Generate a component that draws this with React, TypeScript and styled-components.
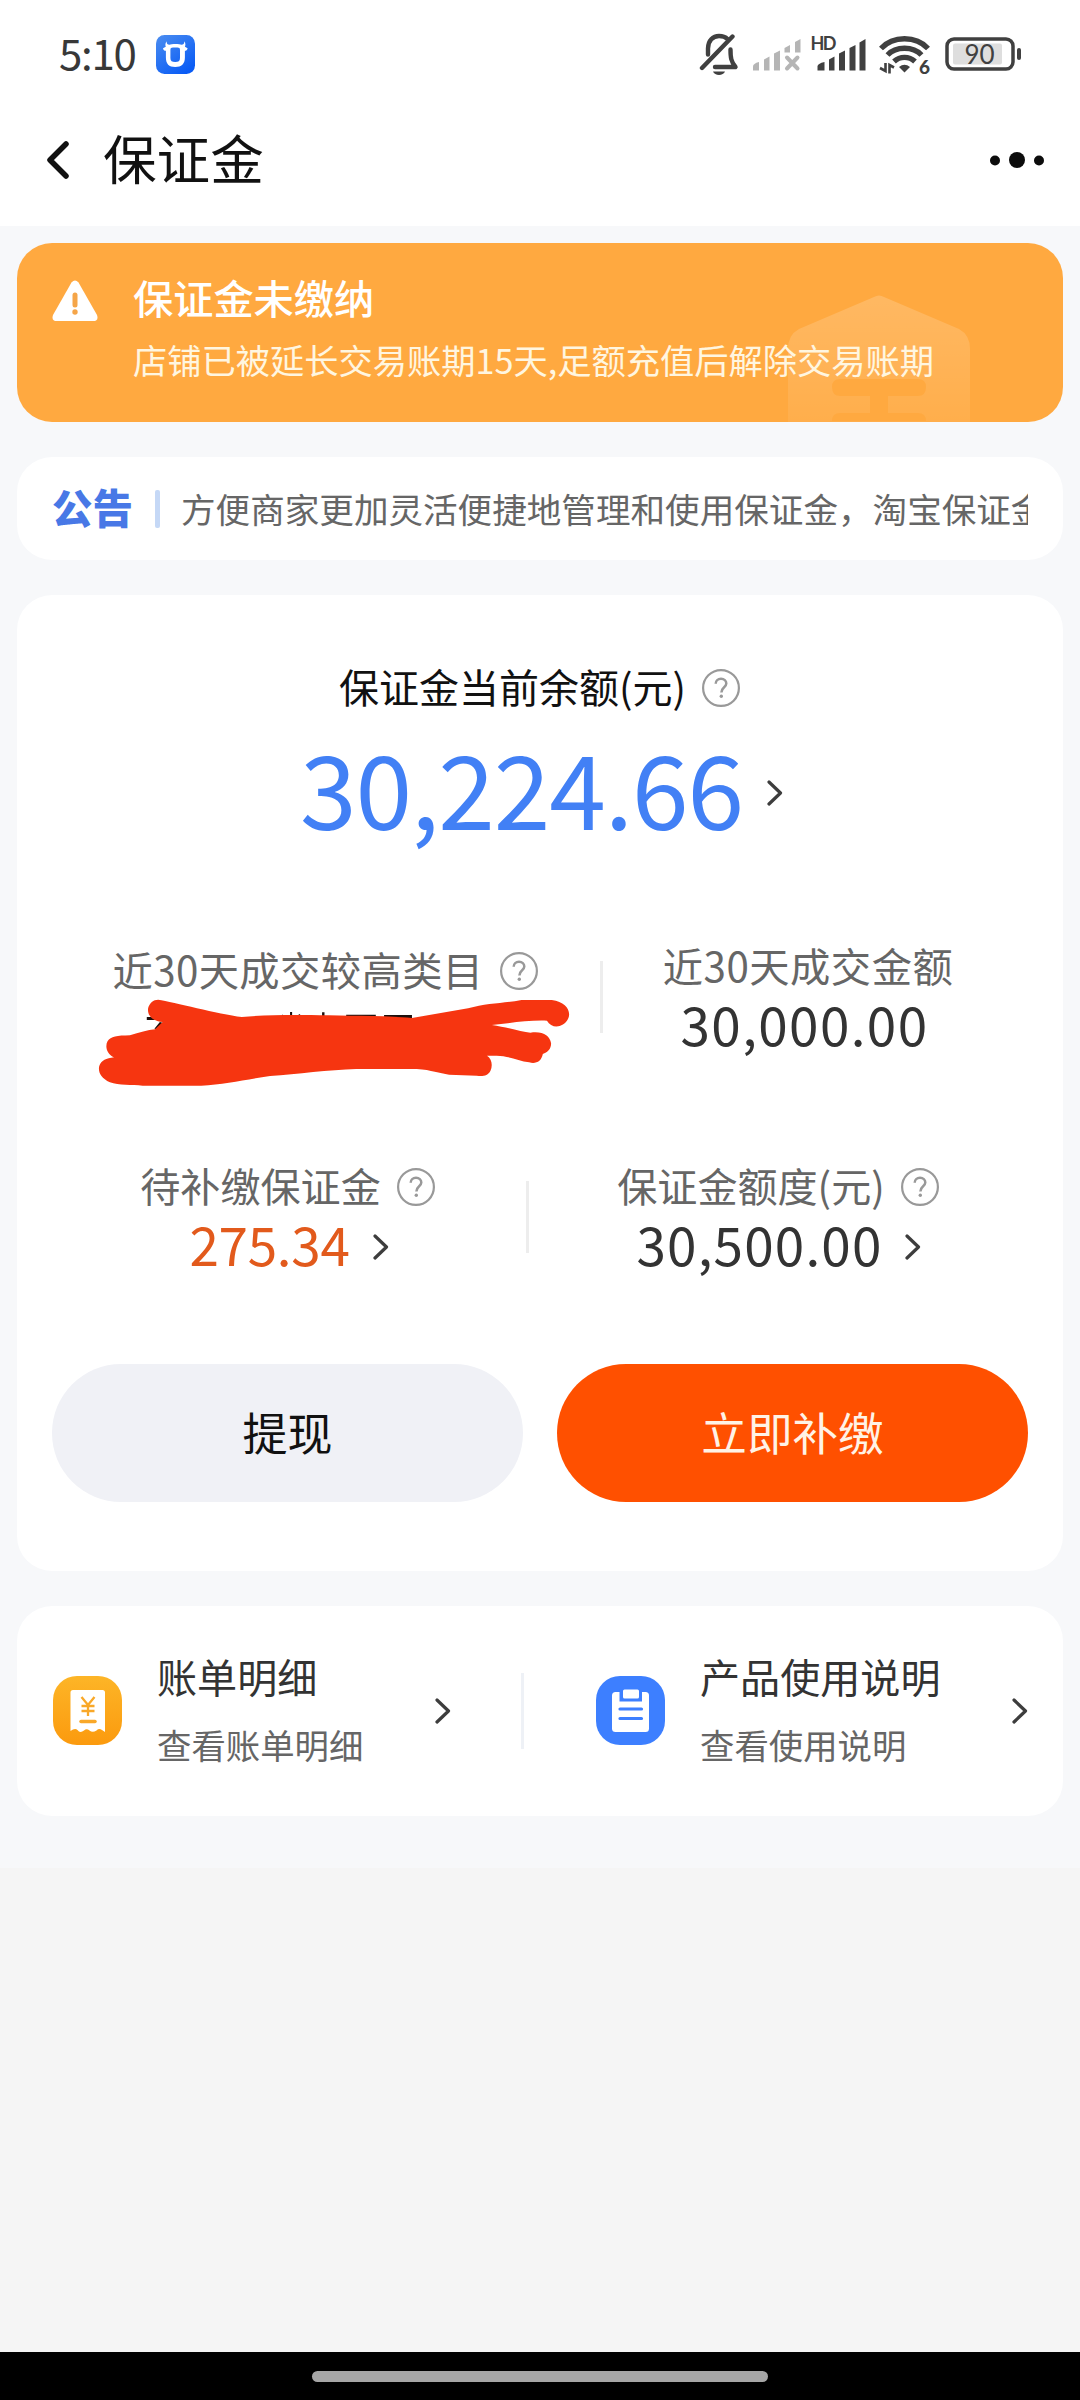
import React from "react";
import styled, { createGlobalStyle } from "styled-components";

const GlobalStyle = createGlobalStyle`
  * { box-sizing: border-box; }
  body {
    margin: 0;
    background: #f5f5f5;
    font-family: "Noto Sans CJK SC", "Noto Sans", sans-serif;
    color: #111;
  }
`;

const Screen = styled.div`
  width: 1080px;
  height: 2400px;
  display: flex;
  flex-direction: column;
  overflow: hidden;
  background: #f5f5f5;
`;

const StatusBar = styled.header`
  height: 109px;
  flex: none;
  display: flex;
  align-items: center;
  justify-content: space-between;
  padding: 0 59px 0 59px;
  background: #fff;
`;

const StatusLeft = styled.div`
  display: flex;
  align-items: center;
  gap: 21px;
`;

const NavBar = styled.nav`
  height: 117px;
  flex: none;
  display: flex;
  align-items: center;
  padding: 0 36px 15px 47px;
  background: #fff;
`;

const Page = styled.main`
  height: 1642px;
  flex: none;
  display: flex;
  flex-direction: column;
  gap: 35px;
  padding: 17px 17px 0;
  background: #f7f8fa;
`;

type TextProps = {
  $size: number;
  $color?: string;
  $weight?: number;
  $spacing?: number;
};

const Label = styled.span<TextProps>`
  font-size: ${(p) => p.$size}px;
  color: ${(p) => p.$color ?? "#111"};
  font-weight: ${(p) => p.$weight ?? 400};
  letter-spacing: ${(p) => p.$spacing ?? 0}px;
  line-height: 1;
  padding-bottom: 0.11em;
  white-space: nowrap;
`;

const Figure = styled(Label)`
  padding-bottom: 0.14em;
`;

const NavTitle = styled(Label)`
  margin-left: 34px;
  flex: 1;
`;

const Card = styled.section<{ $height: number }>`
  height: ${(p) => p.$height}px;
  flex: none;
  border-radius: 35px;
  background: #fff;
`;

const Banner = styled(Card)`
  position: relative;
  overflow: hidden;
  display: flex;
  padding: 34px 35px 0;
  gap: 35px;
  background: #ffa940;
`;

const BannerArt = styled.svg`
  position: absolute;
  left: 771px;
  top: 52px;
`;

const BannerBody = styled.div`
  position: relative;
  display: flex;
  flex-direction: column;
  gap: 20px;
`;

const BannerIcon = styled.svg`
  flex: none;
  margin-top: 3px;
`;

const Notice = styled(Card)`
  display: flex;
  align-items: center;
  padding: 0 35px;
`;

const NoticeTag = styled(Label)`
  padding-bottom: 0.06em;
`;

const NoticeBar = styled.i`
  width: 5px;
  height: 38px;
  border-radius: 2px;
  background: #c5d8f6;
  margin: 0 21px 0 22px;
  flex: none;
`;

const NoticeText = styled.div`
  flex: 1;
  min-width: 0;
  overflow: hidden;
  display: flex;
  padding-top: 3px;
`;

const BalanceCard = styled(Card)`
  display: flex;
  flex-direction: column;
  padding: 73px 35px 69px;
`;

const Line = styled.div<{ $gap?: number; $nudge?: number }>`
  height: 40px;
  display: flex;
  align-items: center;
  justify-content: center;
  gap: ${(p) => p.$gap ?? 16}px;
  padding-right: ${(p) => p.$nudge ?? 0}px;
`;

const BalanceLine = styled(Line)`
  height: 100px;
  margin-top: 35px;
  padding-left: 3px;
`;

const StatRow = styled.div<{ $top: number }>`
  display: flex;
  align-items: center;
  height: 100px;
  margin-top: ${(p) => p.$top}px;
`;

const Stat = styled.div<{ $width?: number; $shift?: number; $drop?: number }>`
  position: relative;
  ${(p) => (p.$width ? `width: ${p.$width}px; flex: none;` : "flex: 1;")}
  height: 100px;
  display: flex;
  flex-direction: column;
  gap: 20px;
  padding: ${(p) => p.$drop ?? 0}px ${(p) => p.$shift ?? 0}px 0 0;
`;

const Rule = styled.i<{ $height: number; $color?: string; $left?: number }>`
  width: 3px;
  height: ${(p) => p.$height}px;
  margin-left: ${(p) => p.$left ?? 0}px;
  flex: none;
  background: ${(p) => p.$color ?? "#ededed"};
`;

const Scribble = styled.svg`
  position: absolute;
  left: 8px;
  top: -27px;
`;

const Actions = styled.div`
  display: flex;
  gap: 34px;
  margin-top: 97px;
`;

const Button = styled.button<{ $primary?: boolean }>`
  flex: 1;
  height: 138px;
  padding: 2px 0 0;
  border: 0;
  border-radius: 69px;
  display: flex;
  align-items: center;
  justify-content: center;
  font-family: inherit;
  background: ${(p) => (p.$primary ? "#ff5000" : "#f0f1f6")};
`;

const LinksCard = styled(Card)`
  display: flex;
  align-items: center;
  padding: 0 35px 0 36px;
`;

const LinkItem = styled.a<{ $width: number; $left?: number }>`
  width: ${(p) => p.$width}px;
  padding-left: ${(p) => p.$left ?? 0}px;
  display: flex;
  align-items: center;
`;

const LinkIcon = styled.svg`
  flex: none;
  margin-bottom: 2px;
`;

const LinkCopy = styled.div`
  flex: 1;
  display: flex;
  flex-direction: column;
  gap: 26px;
  padding-bottom: 1px;
  margin-left: 35px;
`;

const HomeBar = styled.footer`
  height: 48px;
  flex: none;
  margin-top: auto;
  display: flex;
  align-items: center;
  justify-content: center;
  background: #000;
`;

const HomePill = styled.i`
  width: 456px;
  height: 11px;
  border-radius: 6px;
  background: #a6a6a6;
  margin-top: 1px;
`;

const Chevron = () => (
  <svg width="16" height="26" viewBox="0 0 16 26" fill="none">
    <path d="M2 2 L13.5 13 L2 24" stroke="#3d3d3d" strokeWidth="3.2" strokeLinecap="round" strokeLinejoin="round" />
  </svg>
);

const Help = () => (
  <svg width="38" height="38" viewBox="0 0 38 38" fill="none">
    <circle cx="19" cy="19" r="17.9" stroke="#999" strokeWidth="2.2" />
    <path d="M13.7 14.8 C13.7 11.6 16 9.8 19 9.8 C22.1 9.8 24.3 11.8 24.3 14.6 C24.3 18.4 19.4 18.2 19.4 23.4" stroke="#999" strokeWidth="2.5" />
    <circle cx="19.3" cy="27.3" r="1.7" fill="#999" />
  </svg>
);

const AppBadge = () => (
  <svg width="39" height="39" viewBox="0 0 39 39">
    <defs>
      <linearGradient id="badge" x1="0" y1="0" x2="0.7" y2="1">
        <stop offset="0" stopColor="#4b8df0" />
        <stop offset="1" stopColor="#0a5cf5" />
      </linearGradient>
    </defs>
    <rect width="39" height="39" rx="8.5" fill="url(#badge)" />
    <path
      fill="#fff"
      fillRule="evenodd"
      d="M10.6 6.2 C10.6 8.6 11.5 9.7 13.4 9.8 C15 8.8 24 8.8 25.4 9.8 C27.4 9.7 28.3 8.6 28.4 6.2 C29.7 8.2 29.6 10.2 28.9 11.8 L31.6 13.2 C31.2 15.2 30.2 15.8 28.9 15.8 V22.5 C28.9 29 25.5 32 19.2 32 C12.9 32 9.9 29 9.9 22.5 V15.8 C8.4 15.8 7.3 15 7 13.2 L9.8 11.8 C9.1 10 9.3 8.1 10.6 6.2 Z M17 12.6 C15.2 12.6 14.4 13.4 14.4 15 V23 C14.4 26 16 27 19.2 27 C22.4 27 24 26 24 23 V15 C24 13.4 23.2 12.6 21.4 12.6 Z"
    />
  </svg>
);

const ink = "#404040";

const StatusIcons = () => (
  <svg width="322" height="46" viewBox="699 31.5 322 46" fill="none" fontFamily="Lato, sans-serif">
    <g stroke={ink} strokeWidth="4.4" strokeLinecap="round" strokeLinejoin="round">
      <path d="M708 54 V48 C708 40 713 35.5 719 35.5 C722.5 35.5 725.5 36.5 727.5 38.5" />
      <path d="M730.5 49 C730.5 57 731 61 735.5 66.5 H715" />
      <path d="M702 67.5 L732.5 36" />
    </g>
    <path d="M713 71 H725 C723.5 75.5 714.5 75.5 713 71 Z" fill={ink} />
    <g fill="#b5b5b5">
      <path d="M753 70 V66 Q753 63 759 61.5 V70 Z" />
      <path d="M764 70 V59 L769.5 56 V70 Z" />
      <path d="M774 70 V53 L780 50 V70 Z" />
      <path d="M784.5 52 V47.5 L790 44.5 V52 Z" />
      <path d="M795 52 V41.5 L800.5 38.5 V52 Z" />
    </g>
    <path d="M787 57 L797.5 68 M797.5 57 L787 68" stroke="#b5b5b5" strokeWidth="4" strokeLinecap="round" />
    <text x="810.5" y="49.5" fontSize="18" fontWeight="700" fill={ink} textLength="26">HD</text>
    <g fill={ink}>
      <path d="M817.5 70 V66 Q817.5 63 824.5 61.5 V70 Z" />
      <path d="M829 70 V59 L834.5 56 V70 Z" />
      <path d="M839 70 V53 L845 50 V70 Z" />
      <path d="M849.5 70 V47.5 L855.5 44.5 V70 Z" />
      <path d="M859.5 70 V42 L865.5 38.5 V70 Z" />
    </g>
    <g stroke={ink} strokeWidth="5.4">
      <path d="M881 48 C893 35 916 35 928 48" />
      <path d="M887.5 54.5 C896 45.5 913 45.5 921.5 54.5" />
      <path d="M894 61 C900 55.5 909 55.5 915 61" />
    </g>
    <path d="M904.5 72 L899 66.5 Q904.5 62 910 66.5 Z" fill={ink} />
    <path d="M885.5 62.5 V70.5 L880 67.5 M889.5 73 V64.5 L894 67" stroke={ink} strokeWidth="2.6" />
    <text x="919" y="73" fontSize="19" fontWeight="900" fill={ink}>6</text>
    <rect x="947" y="38.5" width="66" height="30" rx="7" stroke={ink} strokeWidth="3.5" />
    <rect x="953" y="43" width="49" height="21" rx="2" fill="#dedede" />
    <rect x="1017" y="47.5" width="4" height="12" rx="2" fill={ink} />
    <text x="964.5" y="63" fontSize="26" fill={ink} textLength="30">90</text>
  </svg>
);

const BillIcon = () => (
  <LinkIcon width="69" height="69" viewBox="0 0 69 69" fill="none">
    <defs>
      <linearGradient id="bill" x1="0" y1="0" x2="0" y2="1">
        <stop offset="0" stopColor="#fdb527" />
        <stop offset="1" stopColor="#fb9a0e" />
      </linearGradient>
    </defs>
    <rect width="69" height="69" rx="24" fill="url(#bill)" />
    <path d="M20 14 H49.5 Q52 14 52 16.5 V56 L49 54 Q46 52 43.5 54.5 Q39.5 57 36.5 54.5 Q33.5 52 31 54.5 Q27 57.5 24.5 54 Q22 51.5 17.5 55 V16.5 Q17.5 14 20 14 Z" fill="#fff" />
    <path d="M28.5 21 L35 29 L41.5 21 M35 29 V40 M28.5 30 H41.5 M28.5 35 H41.5" stroke="#f9a828" strokeWidth="2.3" />
    <path d="M28 45.5 H42" stroke="#f9a828" strokeWidth="3.5" strokeLinecap="round" />
  </LinkIcon>
);

const GuideIcon = () => (
  <LinkIcon width="69" height="69" viewBox="0 0 69 69" fill="none">
    <rect width="69" height="69" rx="24" fill="#3d7fff" />
    <rect x="16" y="16" width="37" height="40" rx="3.5" fill="#fff" />
    <path d="M23.5 13 H46 V25.5 H23.5 Z" fill="#3d7fff" />
    <rect x="27" y="13.5" width="16" height="9" rx="1.5" fill="#fff" />
    <path d="M24 33 H45.5 M24 42.5 H45.5" stroke="#3d7fff" strokeWidth="3.2" strokeLinecap="round" />
  </LinkIcon>
);

const RedMarker = () => (
  <Scribble width="540" height="180" viewBox="0 0 1568 540" preserveAspectRatio="none">
    <g fill="#1c0f0c">
      <path d="M252 291 H275 V300 H252 Z M290 306 L300 309 L284 328 L274 326 Z" />
      <path d="M646 283 L650 290 H644 Z M668 276 H674 V290 H668 Z M694 282 L698 284 L694 291 H690 Z M761 277 H768 V290 H761 Z M831 284 H917 V290 H831 Z M941 285 H1022 V295 H941 Z" />
    </g>
    <path
      fill="#f63510"
      d="M285 239 C330 246 460 282 528 291 C600 284 680 284 780 286 C860 288 960 288 1022 294 L1185 265 C1240 249 1290 250 1340 240 H1428 C1470 245 1486 275 1475 297 C1462 323 1428 328 1414 302 C1360 300 1310 309 1254 315 C1300 322 1340 336 1366 338 C1402 333 1422 346 1426 370 C1426 388 1415 398 1402 402 C1398 424 1382 433 1362 427 C1330 422 1300 407 1268 407 H1240 C1254 415 1257 437 1250 452 C1242 468 1228 469 1210 467 L1130 464 C1100 460 1080 450 1036 447 H860 C780 449 690 463 610 468 C540 478 480 493 410 497 H240 C210 495 170 496 145 487 C118 474 110 455 114 438 C120 420 134 416 157 412 C136 402 130 380 138 364 C148 349 165 347 203 346 C230 337 255 330 276 328 L298 306 C262 302 253 282 256 264 C260 249 271 239 285 239 Z"
    />
  </Scribble>
);

export default function App() {
  return (
    <>
      <GlobalStyle />
      <Screen>
        <StatusBar>
          <StatusLeft>
            <Figure $size={42} $color="#383838" $spacing={-1.3}>5:10</Figure>
            <AppBadge />
          </StatusLeft>
          <StatusIcons />
        </StatusBar>

        <NavBar>
          <svg width="22" height="38" viewBox="0 0 22 38" fill="none">
            <path d="M19 3 L3 19 L19 35" stroke="#111" strokeWidth="5.5" strokeLinecap="round" strokeLinejoin="round" />
          </svg>
          <NavTitle $size={53.6}>保证金</NavTitle>
          <svg width="56" height="18" viewBox="0 0 56 18" fill="#0c0c0c">
            <circle cx="7" cy="9.5" r="5" />
            <circle cx="29" cy="9" r="8" />
            <circle cx="51" cy="9.5" r="5" />
          </svg>
        </NavBar>

        <Page>
          <Banner $height={179}>
            <BannerArt width="184" height="160" viewBox="0 0 184 160">
              <defs>
                <linearGradient id="house" x1="0" y1="0" x2="0" y2="1">
                  <stop offset="0" stopColor="#fff" stopOpacity="0.18" />
                  <stop offset="0.8" stopColor="#fff" stopOpacity="0.06" />
                </linearGradient>
              </defs>
              <path
                fill="url(#house)"
                fillRule="evenodd"
                d="M86 2 Q91 -1 96 2 L171 34 Q182 40 182 54 V160 H0 V54 Q0 40 11 34 Z M52 84 Q44 84 44 92 Q44 101 52 101 H82 V118 H52 Q44 118 44 126 H138 Q138 118 130 118 H100 V101 H130 Q138 101 138 92 Q138 84 130 84 Z"
              />
            </BannerArt>
            <BannerIcon width="46" height="42" viewBox="0 0 46 42">
              <path d="M19.5 2.5 Q23 -1.5 26.5 2.5 L45 35 Q47 41 41 41 H5 Q-1 41 1 35 Z" fill="#fff" />
              <path d="M23 15 V25" stroke="#f5a548" strokeWidth="5" strokeLinecap="round" />
              <circle cx="23" cy="32" r="2.7" fill="#f5a548" />
            </BannerIcon>
            <BannerBody>
              <Label $size={40.2} $color="#fff" $weight={500}>保证金未缴纳</Label>
              <Label $size={34.25} $color="#fff6e0">店铺已被延长交易账期15天,足额充值后解除交易账期</Label>
            </BannerBody>
          </Banner>

          <Notice $height={103}>
            <NoticeTag $size={40.5} $color="#4878e6" $weight={900}>公告</NoticeTag>
            <NoticeBar />
            <NoticeText>
              <Label $size={34.6} $color="#666">方便商家更加灵活便捷地管理和使用保证金，淘宝保证金</Label>
            </NoticeText>
          </Notice>

          <BalanceCard $height={976}>
            <Line $nudge={1}>
              <Label $size={40}>保证金当前余额(元)</Label>
              <Help />
            </Line>
            <BalanceLine $gap={24}>
              <Figure $size={102} $color="#4280f5" $spacing={-1.1}>30,224.66</Figure>
              <Chevron />
            </BalanceLine>

            <StatRow $top={104}>
              <Stat $width={548} $drop={4}>
                <Line $nudge={2}>
                  <Label $size={40.3} $color="#666" $spacing={0.4}>近30天成交较高类目</Label>
                  <Help />
                </Line>
                <RedMarker />
              </Stat>
              <Rule $height={72} />
              <Stat $shift={15}>
                <Line>
                  <Label $size={40.3} $color="#666" $spacing={0.5}>近30天成交金额</Label>
                </Line>
                <Line $nudge={7}>
                  <Figure $size={53} $color="#333" $spacing={1.4}>30,000.00</Figure>
                </Line>
              </Stat>
            </StatRow>

            <StatRow $top={120}>
              <Stat $width={474}>
                <Line $nudge={3}>
                  <Label $size={40.1} $color="#666">待补缴保证金</Label>
                  <Help />
                </Line>
                <Line $gap={23}>
                  <Figure $size={53} $color="#e25a1c" $spacing={-0.3}>275.34</Figure>
                  <Chevron />
                </Line>
              </Stat>
              <Rule $height={72} />
              <Stat>
                <Line $nudge={1}>
                  <Label $size={40.1} $color="#666">保证金额度(元)</Label>
                  <Help />
                </Line>
                <Line $gap={22}>
                  <Figure $size={53} $color="#333" $spacing={1.2}>30,500.00</Figure>
                  <Chevron />
                </Line>
              </Stat>
            </StatRow>

            <Actions>
              <Button>
                <Label $size={45}>提现</Label>
              </Button>
              <Button $primary>
                <Label $size={45.6} $color="#fff3e6">立即补缴</Label>
              </Button>
            </Actions>
          </BalanceCard>

          <LinksCard $height={210}>
            <LinkItem $width={398}>
              <BillIcon />
              <LinkCopy>
                <Label $size={40.1} $color="#333">账单明细</Label>
                <Label $size={34.4} $color="#666">查看账单明细</Label>
              </LinkCopy>
              <Chevron />
            </LinkItem>
            <Rule $height={76} $color="#eef1f6" $left={70} />
            <LinkItem $width={504} $left={72}>
              <GuideIcon />
              <LinkCopy>
                <Label $size={40.1} $color="#333">产品使用说明</Label>
                <Label $size={34.4} $color="#666">查看使用说明</Label>
              </LinkCopy>
              <Chevron />
            </LinkItem>
          </LinksCard>
        </Page>

        <HomeBar>
          <HomePill />
        </HomeBar>
      </Screen>
    </>
  );
}
